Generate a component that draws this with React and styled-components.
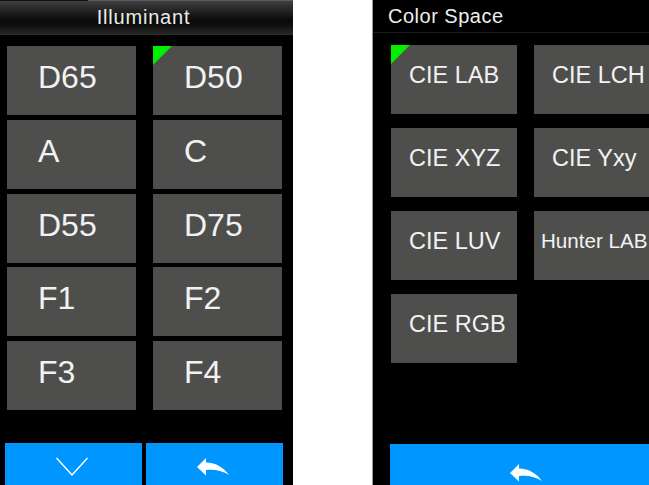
import React from 'react';
import styled, { createGlobalStyle } from 'styled-components';

const GlobalStyle = createGlobalStyle`
  html, body {
    margin: 0;
    padding: 0;
    background: #fff;
    overflow: hidden;
  }
  body {
    font-family: "Liberation Sans", Arial, sans-serif;
  }
`;

const Page = styled.div`
  width: 649px;
  height: 485px;
  display: flex;
  justify-content: space-between;
  overflow: hidden;
`;

const Screen = styled.section`
  width: ${(p) => p.$width}px;
  flex: none;
  height: 485px;
  box-sizing: border-box;
  background: #000;
  border-left: ${(p) => (p.$edge ? '1px solid #999' : '0')};
  display: flex;
  flex-direction: column;
  overflow: hidden;
`;

const GradientHeader = styled.header`
  height: 35px;
  flex: none;
  box-sizing: border-box;
  border-bottom: 1px solid #2a2a2a;
  background:
    linear-gradient(90deg, #111 88px, #5a5a5a 88px) top / 100% 1px no-repeat,
    linear-gradient(#444 0, #333 15%, #0a0a0a 60%, #0c0c0c 70%, #262626 100%);
  color: #e8ede4;
  font-size: 20px;
  letter-spacing: 0.8px;
  line-height: 34px;
  text-align: center;
  padding-right: 6px;
`;

const PlainHeader = styled.header`
  height: 33px;
  flex: none;
  box-sizing: border-box;
  padding-left: 15px;
  border-bottom: 1px solid #1a1a1a;
  color: #eee;
  font-size: 20px;
  letter-spacing: 0.5px;
  line-height: 32px;
`;

const IlluminantGrid = styled.div`
  display: grid;
  grid-template-columns: repeat(2, 129px);
  grid-auto-rows: 69px;
  column-gap: 17px;
  row-gap: 4.75px;
  padding: 11px 0 0 7px;
`;

const SpaceGrid = styled.div`
  display: grid;
  grid-template-columns: repeat(2, 126px);
  grid-auto-rows: 69px;
  column-gap: 17px;
  row-gap: 14px;
  padding: 12px 0 0 18px;
`;

const Option = styled.div`
  position: relative;
  background: #4e4f4d;
  color: #f2f2f2;
  display: flex;
  align-items: center;
  box-sizing: border-box;
  white-space: nowrap;
  padding-left: ${(p) => p.$inset}px;
  padding-bottom: ${(p) => p.$lift}px;
  font-size: ${(p) => p.$size}px;
`;

const Selected = styled.span`
  position: absolute;
  left: 0;
  top: 0;
  width: 0;
  height: 0;
  border-top: 19px solid #00f000;
  border-right: 19px solid transparent;
`;

const Footer = styled.footer`
  margin-top: auto;
  height: ${(p) => p.$height}px;
  flex: none;
  display: flex;
  gap: 4px;
  padding-left: ${(p) => p.$left}px;
`;

const ActionButton = styled.button`
  width: ${(p) => p.$width}px;
  flex: none;
  border: 0;
  padding: ${(p) => p.$top}px ${(p) => p.$right || 0}px 0 0;
  background: #0096ff;
  display: flex;
  justify-content: center;
  align-items: flex-start;
`;

const ChevronIcon = () => (
  <svg width="34" height="20" viewBox="0 0 34 20" style={{ display: 'block' }}>
    <path d="M1.5 1 L17 18 L32.5 1" fill="none" stroke="#fff" strokeWidth="1.5" />
  </svg>
);

const BackIcon = () => (
  <svg width="34" height="20" viewBox="0 0 34 20" style={{ display: 'block' }}>
    <path d="M1 10 L10 1 L10 5.5 C20 5.5 28 11 33 18 C27 14 19 12 10 13 L10 18.5 Z" fill="#fff" />
  </svg>
);

const illuminants = ['D65', 'D50', 'A', 'C', 'D55', 'D75', 'F1', 'F2', 'F3', 'F4'];
const spaces = ['CIE LAB', 'CIE LCH', 'CIE XYZ', 'CIE Yxy', 'CIE LUV', 'Hunter LAB', 'CIE RGB'];

export default function App() {
  return (
    <>
      <GlobalStyle />
      <Page>
        <Screen $width={293}>
          <GradientHeader>Illuminant</GradientHeader>
          <IlluminantGrid>
            {illuminants.map((name) => (
              <Option key={name} $inset={31} $size={32} $lift={6}>
                {name === 'D50' && <Selected />}
                {name}
              </Option>
            ))}
          </IlluminantGrid>
          <Footer $height={42} $left={5}>
            <ActionButton $width={137} $top={14} $right={3}>
              <ChevronIcon />
            </ActionButton>
            <ActionButton $width={137} $top={14} $right={3}>
              <BackIcon />
            </ActionButton>
          </Footer>
        </Screen>
        <Screen $width={277} $edge>
          <PlainHeader>Color Space</PlainHeader>
          <SpaceGrid>
            {spaces.map((name) => (
              <Option
                key={name}
                $inset={name === 'Hunter LAB' ? 7 : 18}
                $size={name === 'Hunter LAB' ? 20.6 : 23.5}
                $lift={name === 'Hunter LAB' ? 9 : 8}
              >
                {name === 'CIE LAB' && <Selected />}
                {name}
              </Option>
            ))}
          </SpaceGrid>
          <Footer $height={41} $left={17}>
            <ActionButton $width={271} $top={19}>
              <BackIcon />
            </ActionButton>
          </Footer>
        </Screen>
      </Page>
    </>
  );
}
